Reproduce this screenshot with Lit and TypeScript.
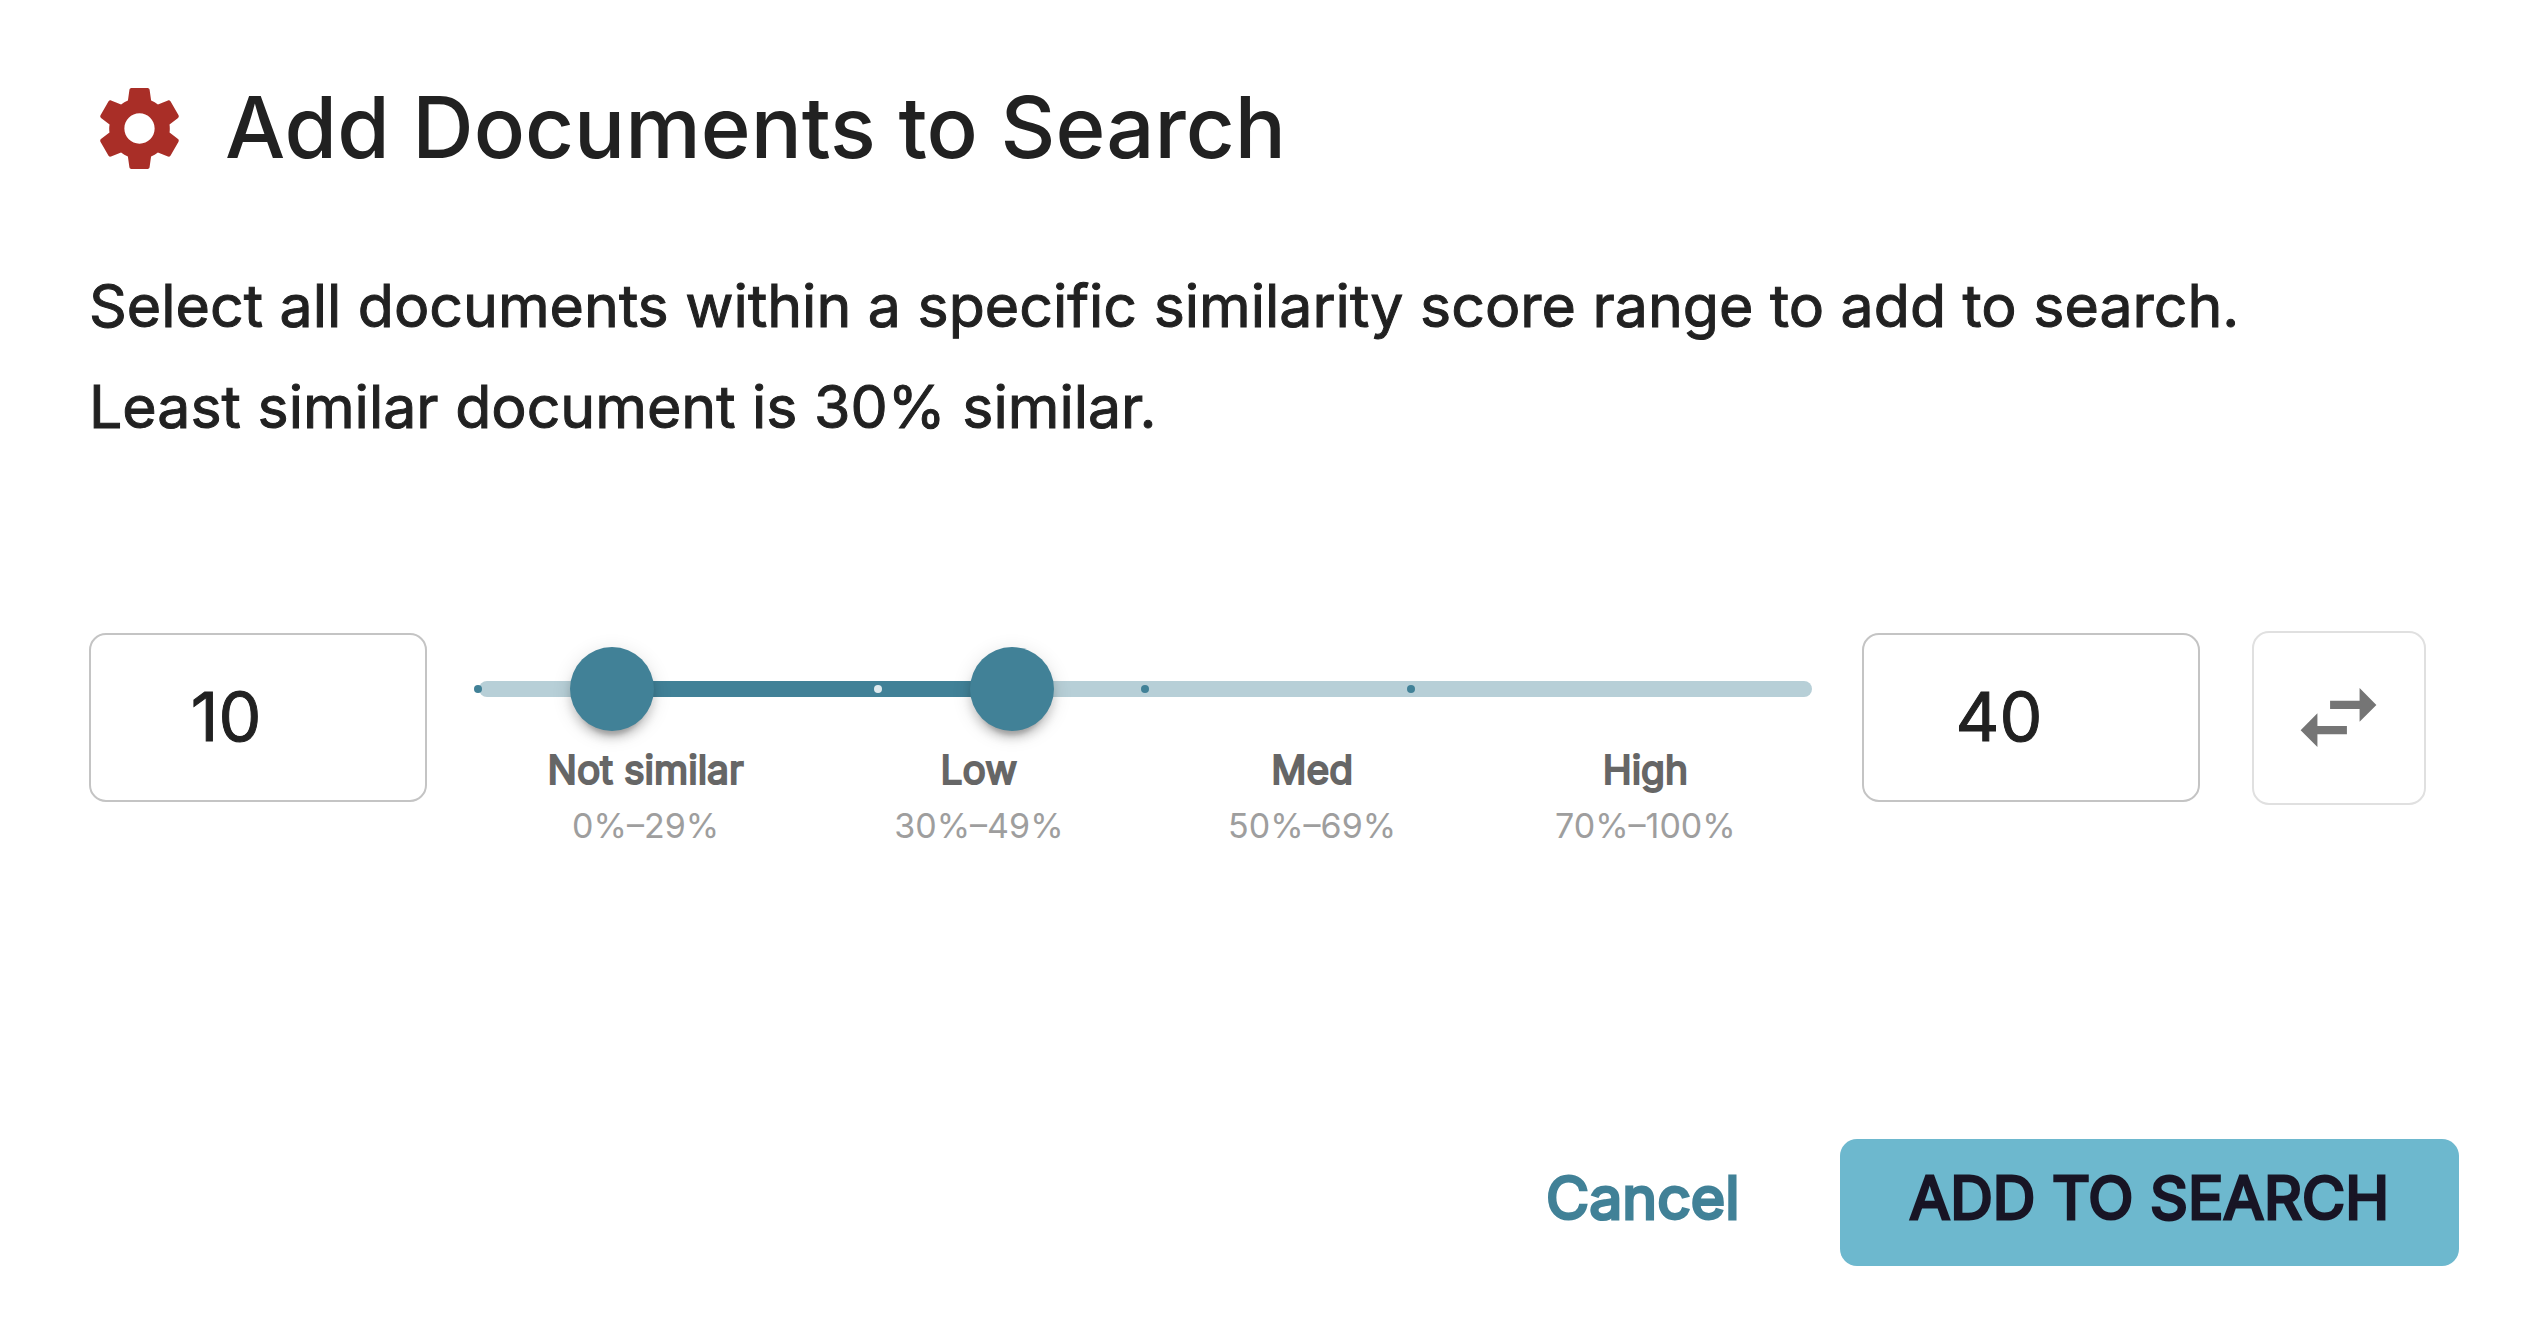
import { LitElement, html, css } from "lit";
import { customElement, state } from "lit/decorators.js";

interface Band {
  name: string;
  from: number;
  to: number;
}

const BANDS: Band[] = [
  { name: "Not similar", from: 0, to: 29 },
  { name: "Low", from: 30, to: 49 },
  { name: "Med", from: 50, to: 69 },
  { name: "High", from: 70, to: 100 },
];

@customElement("range-slider")
export class RangeSlider extends LitElement {
  static properties = {
    low: { type: Number },
    high: { type: Number },
  };

  declare low: number;
  declare high: number;

  static styles = css`
    :host {
      display: block;
      min-width: 0;
    }
    .rail-box {
      position: relative;
      height: 84px;
      display: flex;
      align-items: center;
    }
    .rail {
      position: relative;
      flex: 1;
      height: 16px;
      border-radius: 8px;
      background: #b7cfd7;
    }
    .fill {
      position: absolute;
      top: 0;
      height: 16px;
      background: #418197;
    }
    .mark {
      position: absolute;
      top: 4px;
      width: 8px;
      height: 8px;
      margin-left: -5px;
      border-radius: 4px;
      background: #418197;
    }
    .mark.inside {
      background: #dfeaee;
    }
    .thumb {
      position: absolute;
      top: 0;
      left: -42px;
      width: calc(100% + 84px);
      height: 84px;
      margin: 0;
      background: none;
      appearance: none;
      pointer-events: none;
    }
    .thumb::-webkit-slider-thumb {
      appearance: none;
      width: 84px;
      height: 84px;
      border: 0;
      border-radius: 50%;
      background: #418197;
      box-shadow:
        0 12px 4px -8px rgba(0, 0, 0, 0.2),
        0 8px 8px 0 rgba(0, 0, 0, 0.14),
        0 4px 20px 0 rgba(0, 0, 0, 0.12);
      pointer-events: auto;
      cursor: pointer;
    }
    .bands {
      display: grid;
      grid-template-columns: repeat(4, 1fr);
      margin: 11px 0 0;
      padding: 0;
      list-style: none;
      text-align: center;
      line-height: 56px;
    }
    .band-name {
      display: block;
      font-size: 39px;
      -webkit-text-stroke: 2px currentColor;
      color: #666666;
    }
    .band-range {
      display: block;
      font-size: 34px;
      color: #9e9e9e;
    }
  `;

  private emit(edge: "low" | "high", event: Event) {
    const value = Number((event.target as HTMLInputElement).value);
    this.dispatchEvent(new CustomEvent("range-change", { detail: { edge, value } }));
  }

  render() {
    return html`
      <div class="rail-box">
        <div class="rail">
          <div class="fill" style="left:${this.low}%;width:${this.high - this.low}%"></div>
          ${BANDS.map(
            (band) => html`<span
              class="mark ${band.from > this.low && band.from < this.high ? "inside" : ""}"
              style="left:${band.from}%"
            ></span>`,
          )}
        </div>
        <input
          class="thumb"
          type="range"
          min="0"
          max="100"
          aria-label="Minimum similarity"
          .value=${String(this.low)}
          @input=${(e: Event) => this.emit("low", e)}
        />
        <input
          class="thumb"
          type="range"
          min="0"
          max="100"
          aria-label="Maximum similarity"
          .value=${String(this.high)}
          @input=${(e: Event) => this.emit("high", e)}
        />
      </div>
      <ul class="bands">
        ${BANDS.map(
          (band) => html`<li>
            <span class="band-name">${band.name}</span>
            <span class="band-range">${band.from}%–${band.to}%</span>
          </li>`,
        )}
      </ul>
    `;
  }
}

@customElement("app-root")
export class AppRoot extends LitElement {
  @state() private low = 10;
  @state() private high = 40;

  static styles = css`
    :host {
      display: block;
      font-family: Inter, "Liberation Sans", sans-serif;
      color: #212121;
      background: #ffffff;
    }
    .dialog {
      box-sizing: border-box;
      min-height: 100vh;
      padding: 78px 65px 60px 89px;
    }
    .header {
      display: flex;
      align-items: flex-start;
      gap: 35px;
    }
    .gear {
      flex: none;
      width: 101px;
      height: 101px;
      fill: #a92e27;
    }
    .title {
      margin: 0;
      font-size: 85px;
      font-weight: 500;
      line-height: 100px;
    }
    .intro {
      margin: 76px 0 0;
      font-size: 59px;
      -webkit-text-stroke: 1px currentColor;
      line-height: 101px;
    }
    .line {
      display: block;
    }
    .controls {
      display: flex;
      align-items: flex-start;
      margin-top: 173px;
      padding-right: 33px;
    }
    .number {
      box-sizing: border-box;
      flex: none;
      width: 338px;
      height: 169px;
      margin: 3px 0 0;
      padding: 0 84px 4px 20px;
      border: 2px solid #c4c4c4;
      border-radius: 17px;
      background: #ffffff;
      color: inherit;
      font: inherit;
      font-size: 68px;
      -webkit-text-stroke: 1px currentColor;
      text-align: center;
      appearance: textfield;
    }
    .number::-webkit-inner-spin-button {
      appearance: none;
      margin: 0;
    }
    .slider {
      flex: 1;
      margin: 17px 50px 0 52px;
    }
    .swap {
      box-sizing: border-box;
      flex: none;
      display: grid;
      place-items: center;
      width: 174px;
      height: 174px;
      margin: 1px 0 0 52px;
      padding: 0 2px 2px 0;
      border: 2px solid #e0e0e0;
      border-radius: 17px;
      background: #ffffff;
      cursor: pointer;
    }
    .swap-icon {
      width: 101px;
      height: 101px;
      fill: #757575;
    }
    .actions {
      display: flex;
      justify-content: flex-end;
      gap: 30px;
      margin-top: 285px;
    }
    .button {
      height: 127px;
      padding: 0 70px 10px;
      border: 0;
      border-radius: 17px;
      background: none;
      color: #418197;
      font: inherit;
      font-size: 59px;
      -webkit-text-stroke: 3px currentColor;
      cursor: pointer;
    }
    .primary {
      background: #6db8ce;
      color: #181525;
    }
  `;

  private setEdge(edge: "low" | "high", value: number) {
    if (edge === "low") {
      this.low = Math.min(Math.max(value, 0), this.high);
    } else {
      this.high = Math.max(Math.min(value, 100), this.low);
    }
  }

  private onRange(event: CustomEvent<{ edge: "low" | "high"; value: number }>) {
    this.setEdge(event.detail.edge, event.detail.value);
  }

  private onNumber(edge: "low" | "high", event: Event) {
    this.setEdge(edge, Number((event.target as HTMLInputElement).value));
  }

  render() {
    return html`
      <main class="dialog">
        <header class="header">
          <svg class="gear" viewBox="0 0 24 24" aria-hidden="true">
            <path
              d="M19.14 12.94c.04-.3.06-.61.06-.94 0-.32-.02-.64-.07-.94l2.03-1.58c.18-.14.23-.41.12-.61l-1.92-3.32c-.12-.22-.37-.29-.59-.22l-2.39.96c-.5-.38-1.03-.7-1.62-.94l-.36-2.54c-.04-.24-.24-.41-.48-.41h-3.84c-.24 0-.43.17-.47.41l-.36 2.54c-.59.24-1.13.57-1.62.94l-2.39-.96c-.22-.08-.47 0-.59.22L2.74 8.87c-.12.21-.08.47.12.61l2.03 1.58c-.05.3-.09.63-.09.94s.02.64.07.94l-2.03 1.58c-.18.14-.23.41-.12.61l1.92 3.32c.12.22.37.29.59.22l2.39-.96c.5.38 1.03.7 1.62.94l.36 2.54c.05.24.24.41.48.41h3.84c.24 0 .44-.17.47-.41l.36-2.54c.59-.24 1.13-.56 1.62-.94l2.39.96c.22.08.47 0 .59-.22l1.92-3.32c.12-.22.07-.47-.12-.61l-2.01-1.58zM12 15.6c-1.98 0-3.6-1.62-3.6-3.6s1.62-3.6 3.6-3.6 3.6 1.62 3.6 3.6-1.62 3.6-3.6 3.6z"
            />
          </svg>
          <h1 class="title">Add Documents to Search</h1>
        </header>

        <p class="intro">
          <span class="line"
            >Select all documents within a specific similarity score range to add to search.</span
          >
          <span class="line">Least similar document is 30% similar.</span>
        </p>

        <div class="controls">
          <input
            class="number"
            type="number"
            min="0"
            max="100"
            aria-label="Minimum similarity percent"
            .value=${String(this.low)}
            @change=${(e: Event) => this.onNumber("low", e)}
          />
          <range-slider
            class="slider"
            .low=${this.low}
            .high=${this.high}
            @range-change=${this.onRange}
          ></range-slider>
          <input
            class="number"
            type="number"
            min="0"
            max="100"
            aria-label="Maximum similarity percent"
            .value=${String(this.high)}
            @change=${(e: Event) => this.onNumber("high", e)}
          />
          <button class="swap" type="button" aria-label="Swap range">
            <svg class="swap-icon" viewBox="0 0 24 24" aria-hidden="true">
              <path
                d="M6.99 11L3 15l3.99 4v-3H14v-2H6.99v-3zM21 9l-3.99-4v3H10v2h7.01v3L21 9z"
              />
            </svg>
          </button>
        </div>

        <footer class="actions">
          <button class="button" type="button">Cancel</button>
          <button class="button primary" type="button">ADD TO SEARCH</button>
        </footer>
      </main>
    `;
  }
}
